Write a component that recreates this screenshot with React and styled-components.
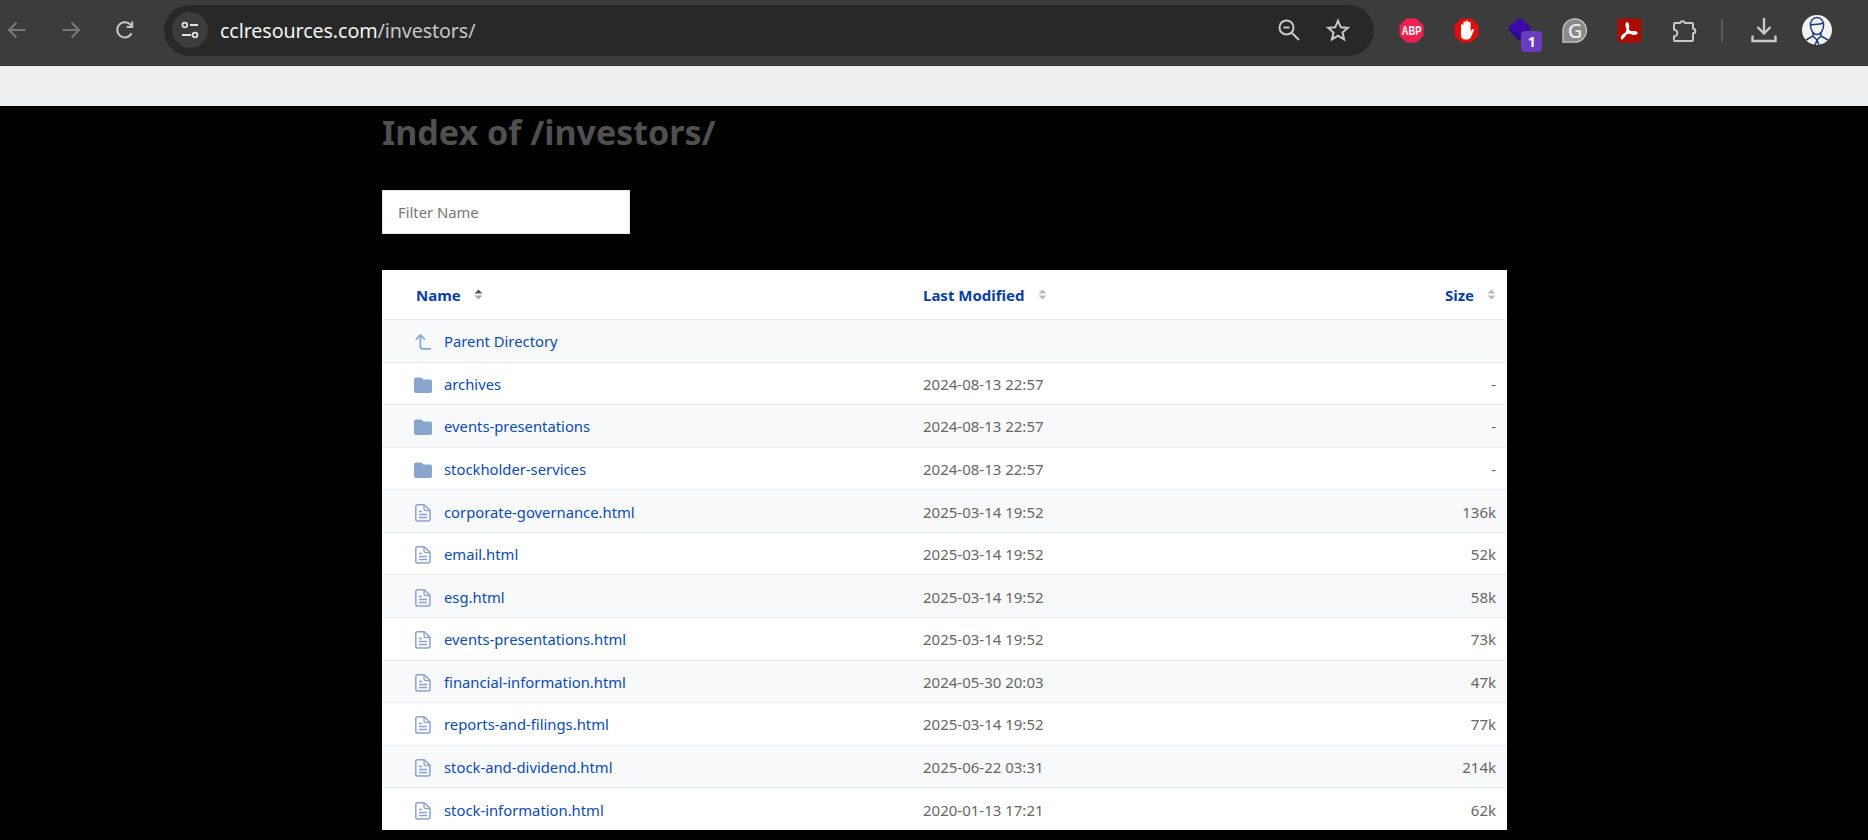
import React from "react";
import styled, { createGlobalStyle } from "styled-components";

const Global = createGlobalStyle`
  html, body { margin: 0; padding: 0; background: #000; height: 100%; overflow: hidden; }
  body { font-family: "Noto Sans", "Open Sans", sans-serif; }
  * { box-sizing: border-box; }
`;

const Toolbar = styled.header`
  display: flex;
  align-items: center;
  height: 66px;
  padding-bottom: 5px;
  background: #3c3c3c;
  border-bottom: 1px solid #333;
  color: #c7c7c7;
`;
const NavButton = styled.button`
  width: 34px;
  height: 34px;
  margin-right: 20px;
  padding: 0;
  border: 0;
  background: none;
  display: flex;
  align-items: center;
  justify-content: center;
  color: ${(p) => (p.$dim ? "#777" : "#c9c9c9")};
`;
const Omnibox = styled.div`
  width: 1209.500px;
  height: 51px;
  margin-left: 2px;
  padding: 0 21px 0 8px;
  display: flex;
  align-items: center;
  gap: 19px;
  border-radius: 26px;
  background: #282828;
`;
const SiteChip = styled.div`
  flex: none;
  width: 36px;
  height: 36px;
  border-radius: 50%;
  background: #3c3c3c;
  display: flex;
  align-items: center;
  justify-content: center;
  margin-right: -7px;
`;
const Url = styled.div`
  flex: 1;
  font-size: 19.700px;
  letter-spacing: -0.1px;
  color: #c4c7c5;
  & b { font-weight: 400; color: #f1f3f4; }
`;
const OmniIcon = styled.span`
  flex: none;
  width: 30px;
  height: 30px;
  display: flex;
  align-items: center;
  justify-content: center;
  color: #c9c9c9;
`;
const Extensions = styled.div`
  display: flex;
  align-items: center;
  margin-left: 11px;
`;
const ExtButton = styled.span`
  position: relative;
  flex: none;
  width: 54.400px;
  height: 34px;
  display: flex;
  align-items: center;
  justify-content: center;
  color: #c9c9c9;
`;
const Badge = styled.span`
  position: absolute;
  left: 28px;
  top: 17.500px;
  width: 21px;
  height: 21px;
  border-radius: 4px;
  background: #6a3cc0;
  color: #fff;
  font-size: 14px;
  font-weight: 700;
  line-height: 21px;
  text-align: center;
`;
const Divider = styled.span`
  flex: none;
  width: 2px;
  height: 23px;
  margin: 0 24px 0 10px;
  background: #5c5c5c;
`;
const SideIcon = styled.span`
  flex: none;
  width: 34px;
  height: 34px;
  margin-right: 19px;
  display: flex;
  align-items: center;
  justify-content: center;
  color: #c9c9c9;
`;

const BookmarkBar = styled.div`
  height: 40px;
  background: #eeeff1;
`;

const Main = styled.main`
  width: 1507px;
  padding-left: 382px;
`;
const Title = styled.h1`
  margin: 0;
  height: 84px;
  padding-top: 3px;
  font-size: 34px;
  line-height: 46px;
  font-weight: 700;
  color: #505050;
`;
const FilterInput = styled.input`
  display: block;
  width: 248px;
  height: 44px;
  padding: 0 15px;
  border: 1px solid #e2e4e8;
  border-radius: 0;
  outline: none;
  background: #fff;
  font: 400 14.800px "Noto Sans", sans-serif;
  &::placeholder { color: #757575; opacity: 1; }
`;
const Table = styled.section`
  margin-top: 36px;
  background: #fff;
`;
const HeaderRow = styled.div`
  display: grid;
  grid-template-columns: 509px 1fr 200px;
  align-items: center;
  height: 50px;
  padding: 0 11px 0 32px;
  border-bottom: 1px solid #e9ebef;
`;
const HeadCell = styled.div`
  display: flex;
  align-items: center;
  justify-content: ${(p) => (p.$right ? "flex-end" : "flex-start")};
  gap: 13px;
  padding-left: ${(p) => (p.$indent ? "2px" : "0")};
  font-size: 15px;
  font-weight: 700;
  color: #0a40a4;
`;
const Row = styled.div`
  display: grid;
  grid-template-columns: 509px 1fr 200px;
  align-items: center;
  height: 42.580px;
  padding: 1px 11px 0 32px;
  border-bottom: 1px solid #e9ebef;
  background: ${(p) => (p.$odd ? "#f8f9fb" : "#fff")};
  &:last-child { height: 42px; border-bottom: 0; }
`;
const NameCell = styled.a`
  display: flex;
  align-items: center;
  color: #0b4bb3;
  font-size: 14.800px;
  text-decoration: none;
`;
const IconSlot = styled.span`
  flex: none;
  width: 30px;
  padding-top: 2px;
  display: flex;
  align-items: center;
`;
const DateCell = styled.div`
  color: #666;
  font-size: 15px;
`;
const SizeCell = styled.div`
  color: #666;
  font-size: 15px;
  text-align: right;
`;

const Sort = ({ active }) => (
  <svg width="9" height="11" viewBox="0 0 9 11">
    <path d="M4.500 0.500 8.500 4.500H0.500Z" fill={active ? "#555" : "#b9b9b9"} />
    <path d="M4.500 10.500 0.500 6.500H8.500Z" fill={active ? "#a8a8a8" : "#b9b9b9"} />
  </svg>
);
const FolderIcon = () => (
  <svg width="18" height="16" viewBox="0 0 18 16">
    <path d="M2 0.500h4.600c.6 0 1 .2 1.400.6L9.500 2.600H16a2 2 0 0 1 2 2V14a2 2 0 0 1-2 2H2a2 2 0 0 1-2-2V2.500a2 2 0 0 1 2-2Z" fill="#8aa5cd" />
  </svg>
);
const FileIcon = () => (
  <svg width="16" height="18" viewBox="0 0 16 18" fill="none" stroke="#8aa5cd" style={{ marginLeft: 1 }}>
    <path d="M2.600 .8h6.600l5.800 5.600v8.400a2.200 2.200 0 0 1-2.200 2.200H2.600A1.800 1.800 0 0 1 .8 15.200V2.600A1.800 1.800 0 0 1 2.600 .8Z" strokeWidth="1.500" />
    <path d="M9 1v3.600a2 2 0 0 0 2 2h4" strokeWidth="1.300" />
    <path d="M4 7.500h3M4 10.500h8M4 13.500h8" strokeWidth="1.400" />
  </svg>
);
const UpIcon = () => (
  <svg width="16" height="16" viewBox="0 0 16 16" fill="none" stroke="#8aa5cd" strokeWidth="1.700" style={{ marginLeft: 1 }}>
    <path d="M.8 5.600 5.400 1l4.600 4.600" />
    <path d="M5.400 1.400V12.400a2.400 2.400 0 0 0 2.400 2.400H16" />
  </svg>
);
const ArrowL = () => (
  <svg width="20" height="20" viewBox="0 0 20 20" fill="none" stroke="currentColor" strokeWidth="2"><path d="M18.500 10H2M9.500 2.500 2 10l7.500 7.500" /></svg>
);
const ArrowR = () => (
  <svg width="20" height="20" viewBox="0 0 20 20" fill="none" stroke="currentColor" strokeWidth="2"><path d="M1.500 10H18M10.500 2.500 18 10l-7.500 7.500" /></svg>
);
const Reload = () => (
  <svg width="20" height="20" viewBox="0 0 20 20" fill="none" stroke="currentColor" strokeWidth="2">
    <path d="M16.600 13.200A7.600 7.600 0 1 1 16 5.400" />
    <path d="M17.200 1.400v5.600h-5.600" />
  </svg>
);
const Tune = () => (
  <svg width="20" height="20" viewBox="0 0 20 20" fill="none" stroke="#e3e3e3" strokeWidth="1.800">
    <circle cx="4.800" cy="5" r="2.400" />
    <circle cx="15" cy="15" r="2.400" />
    <path d="M10 5h8M2 15h9" />
  </svg>
);
const ZoomOut = () => (
  <svg width="24" height="24" viewBox="0 0 24 24" fill="none" stroke="currentColor" strokeWidth="2">
    <circle cx="9.500" cy="9.500" r="7" />
    <path d="M14.800 14.800 22 22M6.500 9.500h6" />
  </svg>
);
const Star = () => (
  <svg width="24" height="24" viewBox="0 0 24 24" fill="none" stroke="currentColor" strokeWidth="2">
    <path d="M12 2.800 14.800 9.300l7 .6-5.300 4.600 1.600 6.900L12 17.700l-6.100 3.700 1.600-6.900L2.200 9.900l7-.6Z" />
  </svg>
);
const Abp = () => (
  <svg width="25" height="25" viewBox="0 0 25 25">
    <path d="M7.500 0.500h10l7 7v10l-7 7h-10l-7-7v-10Z" fill="#f0204e" />
    <text x="2.800" y="17" textLength="19.500" lengthAdjust="spacingAndGlyphs" fontFamily="Liberation Sans, sans-serif" fontWeight="700" fontSize="13" fill="#fff">ABP</text>
  </svg>
);
const Stop = () => (
  <svg width="25" height="25" viewBox="0 0 25 25">
    <path d="M7.500 0.500h10l7 7v10l-7 7h-10l-7-7v-10Z" fill="#e30d0d" />
    <path d="M7 12V7.500a1.200 1.200 0 0 1 2.400 0V4.600a1.200 1.200 0 0 1 2.400 0V3.800a1.200 1.200 0 0 1 2.400 0V5a1.200 1.200 0 0 1 2.400 0V13.500l1.400-2c.8-1 2.500-.2 1.800 1.100l-2.800 6.400c-.7 1.500-2 2.500-3.700 2.500h-2c-2.600 0-4.300-1.800-4.300-4.200Z" fill="#fff" />
  </svg>
);
const Layers = () => (
  <svg width="24" height="24" viewBox="0 0 24 24">
    <path d="M0.500 12 11 22.500 22 12 11 5Z" fill="#2a0a8a" />
    <path d="M0 9.500 12 0 24 9.500 12 17.500Z" fill="#3c08a8" />
  </svg>
);
const Grammarly = () => (
  <svg width="25" height="25" viewBox="0 0 25 25">
    <path d="M12.800 0.800a11.700 11.700 0 0 1 0 23.400H1V12.500A11.800 11.800 0 0 1 12.800 0.800Z" fill="#8a8a8a" stroke="#c9c9c9" strokeWidth="1.300" />
    <text x="13" y="19.500" textAnchor="middle" fontFamily="Noto Sans, sans-serif" fontWeight="500" fontSize="20" fill="#ececec">G</text>
  </svg>
);
const Pdf = () => (
  <svg width="25" height="25" viewBox="0 0 25 25">
    <rect x="0.500" y="0.500" width="24" height="24" rx="3.500" fill="#ad0b00" />
    <path d="M5 20.500c2.400-1.800 4.500-5.400 6-10 .5-1.800.3-5-.8-5.200-1.300-.1-1 3.500.8 6.300 1.500 2.400 3.900 4.400 6.500 4.400 1.900 0 2.700-1 1.600-1.700-1.700-.9-7.400-.3-11.100 1.700-2.400 1.300-3.800 3.200-3 4.500Z" fill="none" stroke="#fff" strokeWidth="2" />
  </svg>
);
const Puzzle = () => (
  <svg width="26" height="26" viewBox="0 0 26 26" fill="none" stroke="currentColor" strokeWidth="2" strokeLinejoin="round">
    <path d="M3 7a1 1 0 0 1 1-1h5.200a2.400 2.400 0 0 1 4.600 0H21a1 1 0 0 1 1 1v4.700a2.300 2.300 0 0 1 0 4.600V23a1 1 0 0 1-1 1H4a1 1 0 0 1-1-1v-3.700a3.200 3.200 0 0 0 3.300-3.300A3.200 3.200 0 0 0 3 12.700Z" />
  </svg>
);
const Download = () => (
  <svg width="26" height="26" viewBox="0 0 26 26" fill="none" stroke="currentColor" strokeWidth="2.400">
    <path d="M13 1v15M6.500 10 13 16.500 19.500 10M1.500 18.500V24h23v-5.500" />
  </svg>
);
const Avatar = () => (
  <svg width="30" height="30" viewBox="0 0 30 30">
    <circle cx="15" cy="15" r="15" fill="#f2f2f2" />
    <g fill="none" stroke="#1e3a78" strokeWidth="1.500">
      <path d="M8.500 11c-.5-5 2.500-8.500 6.500-8.500S22 6 21.500 11c-.3 4.500-3 8.500-6.500 8.500S8.800 15.500 8.500 11Z" />
      <path d="M8.500 10c3-.5 9-.5 13-2" />
      <path d="M11 18v3l-7 4M19 18v3l7 4M11 21l4 4 4-4M15 25l-2 5M15 25l2 5" />
    </g>
  </svg>
);

const rows = [
  ["up", "Parent Directory", "", ""],
  ["dir", "archives", "2024-08-13 22:57", "-"],
  ["dir", "events-presentations", "2024-08-13 22:57", "-"],
  ["dir", "stockholder-services", "2024-08-13 22:57", "-"],
  ["file", "corporate-governance.html", "2025-03-14 19:52", "136k"],
  ["file", "email.html", "2025-03-14 19:52", "52k"],
  ["file", "esg.html", "2025-03-14 19:52", "58k"],
  ["file", "events-presentations.html", "2025-03-14 19:52", "73k"],
  ["file", "financial-information.html", "2024-05-30 20:03", "47k"],
  ["file", "reports-and-filings.html", "2025-03-14 19:52", "77k"],
  ["file", "stock-and-dividend.html", "2025-06-22 03:31", "214k"],
  ["file", "stock-information.html", "2020-01-13 17:21", "62k"],
];
const icons = { up: UpIcon, dir: FolderIcon, file: FileIcon };

export default function App() {
  return (
    <>
      <Global />
      <Toolbar>
        <NavButton $dim><ArrowL /></NavButton>
        <NavButton $dim><ArrowR /></NavButton>
        <NavButton><Reload /></NavButton>
        <Omnibox>
          <SiteChip><Tune /></SiteChip>
          <Url><b>cclresources.com</b>/investors/</Url>
          <OmniIcon><ZoomOut /></OmniIcon>
          <OmniIcon><Star /></OmniIcon>
        </Omnibox>
        <Extensions>
          <ExtButton><Abp /></ExtButton>
          <ExtButton><Stop /></ExtButton>
          <ExtButton><Layers /><Badge>1</Badge></ExtButton>
          <ExtButton><Grammarly /></ExtButton>
          <ExtButton><Pdf /></ExtButton>
          <ExtButton><Puzzle /></ExtButton>
          <Divider />
          <SideIcon><Download /></SideIcon>
          <SideIcon><Avatar /></SideIcon>
        </Extensions>
      </Toolbar>
      <BookmarkBar />
      <Main>
        <Title>Index of /investors/</Title>
        <FilterInput placeholder="Filter Name" />
        <Table>
          <HeaderRow>
            <HeadCell $indent>Name <Sort active /></HeadCell>
            <HeadCell>Last Modified <Sort /></HeadCell>
            <HeadCell $right>Size <Sort /></HeadCell>
          </HeaderRow>
          {rows.map(([type, name, date, size], i) => {
            const Icon = icons[type];
            return (
              <Row key={name} $odd={i % 2 === 0}>
                <NameCell href="#"><IconSlot><Icon /></IconSlot>{name}</NameCell>
                <DateCell>{date}</DateCell>
                <SizeCell>{size}</SizeCell>
              </Row>
            );
          })}
        </Table>
      </Main>
    </>
  );
}
